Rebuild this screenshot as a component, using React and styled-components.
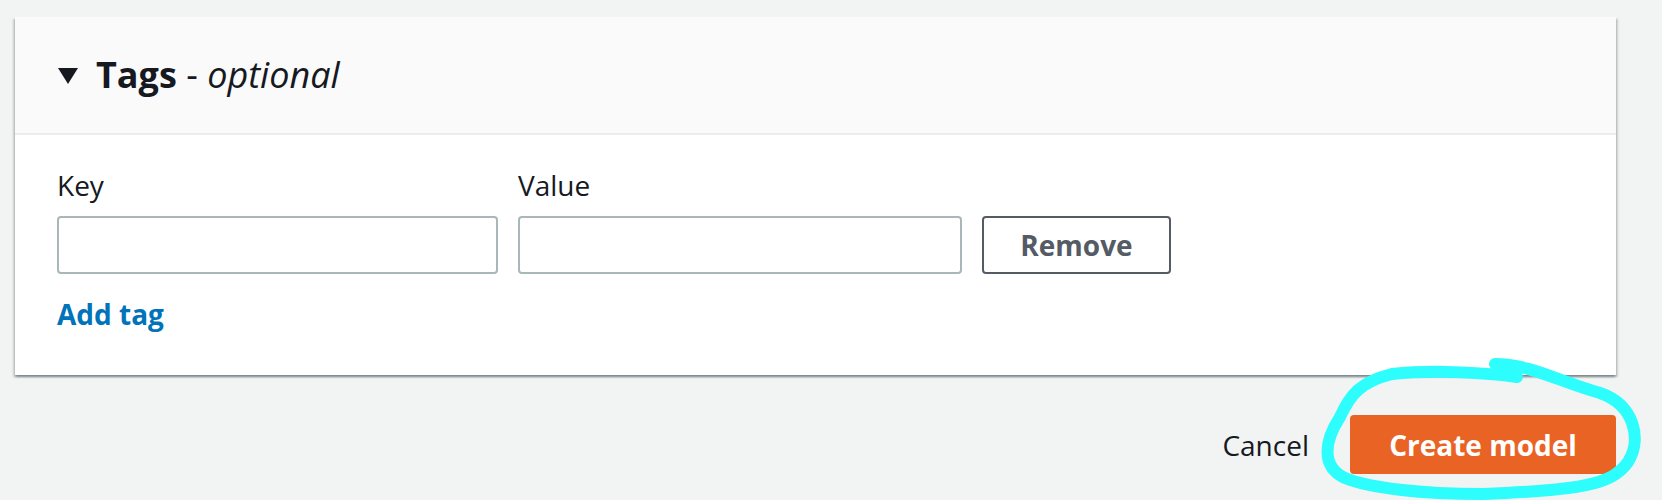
import React from "react";
import styled, { createGlobalStyle } from "styled-components";

const GlobalStyle = createGlobalStyle`
  html, body {
    margin: 0;
    padding: 0;
    background: #f2f3f3;
    font-family: "Open Sans", "Noto Sans", Arial, sans-serif;
    color: #16191f;
  }
`;

const Page = styled.div`
  position: relative;
  width: 1662px;
  height: 500px;
  box-sizing: border-box;
  padding: 17px 46px 0 15px;
  overflow: hidden;
`;

const Card = styled.section`
  background: #ffffff;
  box-shadow: 0 2px 2px 0 rgba(0, 28, 36, 0.3), 2px 2px 2px 0 rgba(0, 28, 36, 0.15),
    -2px 2px 2px 0 rgba(0, 28, 36, 0.15);
`;

const Header = styled.header`
  display: flex;
  align-items: center;
  gap: 18px;
  height: 116px;
  padding-left: 43px;
  background: #fafafa;
  border-bottom: 2px solid #eaeded;
`;

const Caret = styled.span`
  display: block;
  width: 0;
  height: 0;
  border-left: 10px solid transparent;
  border-right: 10px solid transparent;
  border-top: 16px solid #16191f;
  margin-top: 2px;
`;

const Title = styled.h2`
  margin: 0;
  font-size: 36px;
  line-height: 44px;
  font-weight: 700;
  color: #16191f;
`;

const Optional = styled.span`
  font-weight: 400;

  em {
    font-style: italic;
  }
`;

const Body = styled.div`
  padding: 30px 42px 41px;
`;

const Fields = styled.div`
  display: grid;
  grid-template-columns: 441px 444px 189px;
  column-gap: 20px;
  row-gap: 11px;
`;

const Label = styled.label`
  font-size: 28px;
  line-height: 40px;
  color: #16191f;
`;

const Input = styled.input`
  box-sizing: border-box;
  height: 58px;
  width: 100%;
  border: 2px solid #aab7b8;
  border-radius: 4px;
  background: #fff;
  font: inherit;
  font-size: 28px;
  padding: 0 16px;
`;

const Button = styled.button`
  box-sizing: border-box;
  height: ${(p) => (p.$primary ? "59px" : "58px")};
  border-radius: 4px;
  font-family: inherit;
  font-size: 28px;
  font-weight: 700;
  cursor: pointer;
  border: ${(p) => (p.$primary ? "none" : "2px solid #545b64")};
  background: ${(p) => (p.$primary ? "#e96424" : "#ffffff")};
  color: ${(p) => (p.$primary ? "#ffffff" : "#545b64")};
  padding: 0;
  width: ${(p) => p.$width};
`;

const AddLink = styled.a`
  display: inline-block;
  margin-top: 20px;
  font-size: 28px;
  line-height: 40px;
  font-weight: 700;
  color: #0073bb;
  text-decoration: none;
`;

const Footer = styled.div`
  display: flex;
  justify-content: flex-end;
  align-items: center;
  gap: 41px;
  margin-top: 40px;
`;

const TextButton = styled.button`
  border: none;
  background: none;
  padding: 0;
  font-family: inherit;
  font-size: 28px;
  line-height: 40px;
  color: #16191f;
`;

const Scribble = styled.svg`
  position: absolute;
  left: 0;
  top: 0;
  pointer-events: none;
`;

export default function App() {
  return (
    <>
      <GlobalStyle />
      <Page>
        <Card>
          <Header>
            <Caret />
            <Title>
              Tags{" "}
              <Optional>
                - <em>optional</em>
              </Optional>
            </Title>
          </Header>
          <Body>
            <Fields>
              <Label>Key</Label>
              <Label>Value</Label>
              <span />
              <Input />
              <Input />
              <Button $width="189px">Remove</Button>
            </Fields>
            <AddLink href="#">Add tag</AddLink>
          </Body>
        </Card>
        <Footer>
          <TextButton>Cancel</TextButton>
          <Button $primary $width="266px">
            Create model
          </Button>
        </Footer>
        <Scribble width="1662" height="500" viewBox="0 0 1662 500">
          <path
            d="M1495 364 C1530 364 1560 382 1600 393 C1635 405 1642 440 1628 462 C1612 485 1580 490 1483 494 C1420 494 1370 488 1345 478 C1320 466 1325 440 1340 417 C1350 395 1360 382 1392 374 C1430 370 1480 372 1517 377"
            fill="none"
            stroke="#2dfdfd"
            strokeWidth="12"
            strokeLinecap="round"
            strokeLinejoin="round"
          />
        </Scribble>
      </Page>
    </>
  );
}
